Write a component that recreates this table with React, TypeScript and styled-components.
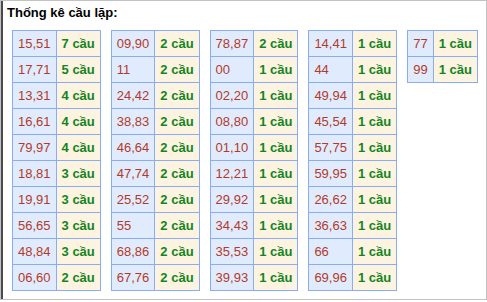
import styled, { createGlobalStyle } from 'styled-components'

const GlobalStyle = createGlobalStyle`
  html, body {
    margin: 0;
    padding: 0;
    background: #ffffff;
  }
`

const data: [string, number][][] = [
  [['15,51', 7], ['17,71', 5], ['13,31', 4], ['16,61', 4], ['79,97', 4], ['18,81', 3], ['19,91', 3], ['56,65', 3], ['48,84', 3], ['06,60', 2]],
  [['09,90', 2], ['11', 2], ['24,42', 2], ['38,83', 2], ['46,64', 2], ['47,74', 2], ['25,52', 2], ['55', 2], ['68,86', 2], ['67,76', 2]],
  [['78,87', 2], ['00', 1], ['02,20', 1], ['08,80', 1], ['01,10', 1], ['12,21', 1], ['29,92', 1], ['34,43', 1], ['35,53', 1], ['39,93', 1]],
  [['14,41', 1], ['44', 1], ['49,94', 1], ['45,54', 1], ['57,75', 1], ['59,95', 1], ['26,62', 1], ['36,63', 1], ['66', 1], ['69,96', 1]],
  [['77', 1], ['99', 1]],
]

const App = () => {
  return (<Frame>
    <GlobalStyle />
    <Title>Thống kê cầu lặp:</Title>
    <Tables>
      {data.map((rows, i) => (
        <Table key={i}>
          <tbody>
            {rows.map(([pair, count]) => (
              <tr key={pair}>
                <PairCell>{pair}</PairCell>
                <CountCell>{count} cầu</CountCell>
              </tr>
            ))}
          </tbody>
        </Table>
      ))}
    </Tables>
  </Frame>)
}

const Frame = styled.div`
  width: 487px;
  height: 300px;
  box-sizing: border-box;
  border: 1px solid #c2c2c2;
  box-shadow: inset 2px 0 0 #4a4a4a;
  font-family: "Liberation Sans", Arial, sans-serif;
  font-size: 13px;
  padding: 4px 0 0 11px;
`

const Title = styled.div`
  font-weight: bold;
  color: #000;
  line-height: 16px;
  margin-left: -5px;
  height: 25px;
`

const Tables = styled.div`
  display: flex;
  align-items: flex-start;
  gap: 10px;
`

const Table = styled.table`
  border-collapse: collapse;
  border: 1px solid #88adf5;

  td {
    border: 1px solid #88adf5;
    height: 25px;
    padding: 0 5px;
    text-align: left;
    vertical-align: middle;
    white-space: nowrap;
    line-height: 15px;
  }
`

const PairCell = styled.td`
  background: #e0ecfd;
  color: #b33a2a;
`

const CountCell = styled.td`
  background: #fdf3e1;
  color: #14841e;
  font-weight: bold;
`

export default App
